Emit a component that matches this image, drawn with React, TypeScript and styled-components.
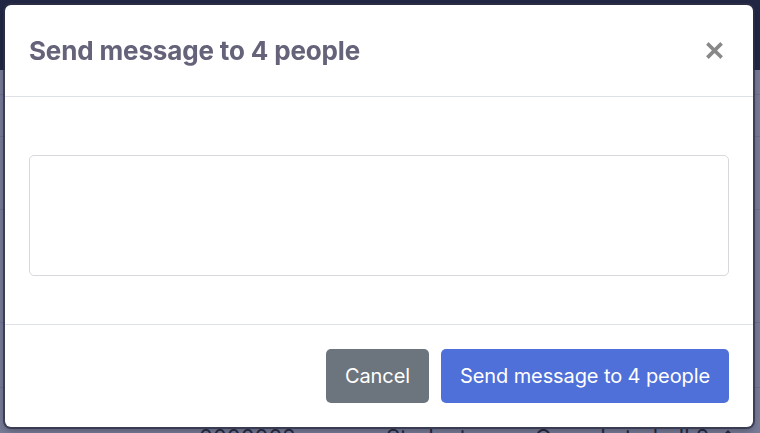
import React, { FC } from "react";
import styled, { createGlobalStyle } from "styled-components";

const GlobalStyle = createGlobalStyle`
  html, body {
    margin: 0;
    padding: 0;
    width: 760px;
    height: 433px;
    overflow: hidden;
    font-family: Inter, "Liberation Sans", sans-serif;
  }
`;

const Page = styled.div`
  width: 760px;
  height: 433px;
  background: #787c98;
  overflow: hidden;
`;

const TopBar = styled.div`
  height: 70px;
  background: #222844;
`;

const Row = styled.div<{ $h: number }>`
  height: ${(p) => p.$h}px;
  border-bottom: 1px solid #6c7090;
  display: flex;
  align-items: flex-start;
  box-sizing: border-box;
`;

const Cell = styled.span<{ $w: number }>`
  width: ${(p) => p.$w}px;
  padding-top: 36px;
  font-size: 22px;
  line-height: 26px;
  color: #262a44;
  white-space: nowrap;
  display: flex;
  align-items: center;
  gap: 8px;
`;

const Backdrop = styled.div`
  position: fixed;
  inset: 0;
  padding: 5px 7px 6px 5px;
  display: flex;
`;

const Modal = styled.div`
  flex: 1;
  display: flex;
  flex-direction: column;
  background: #fff;
  border-radius: 6px;
  box-shadow: 0 0 0 2px rgba(45, 48, 70, 0.75), 0 3px 8px rgba(0, 0, 0, 0.35);
  overflow: hidden;
`;

const Header = styled.div`
  height: 92px;
  flex-shrink: 0;
  display: flex;
  align-items: center;
  justify-content: space-between;
  padding: 0 30px 0 24px;
  border-bottom: 1px solid #dee2e6;
  box-sizing: border-box;
`;

const Title = styled.h2`
  margin: 0;
  font-size: 26px;
  font-weight: 700;
  letter-spacing: -0.15px;
  color: #64637a;
`;

const CloseButton = styled.button`
  border: 0;
  background: none;
  padding: 0;
  width: 17px;
  height: 17px;
  display: flex;
  cursor: pointer;
  color: #888;
`;

const Body = styled.div`
  flex: 1;
  padding: 58px 24px 0;
`;

const Message = styled.textarea`
  display: block;
  width: 100%;
  height: 121px;
  box-sizing: border-box;
  border: 1px solid #d6d8dd;
  border-radius: 5px;
  resize: none;
  font-family: inherit;
  font-size: 16px;
  padding: 8px 12px;
  outline: none;
`;

const Footer = styled.div`
  height: 103px;
  flex-shrink: 0;
  display: flex;
  justify-content: flex-end;
  align-items: flex-start;
  gap: 12px;
  padding: 24px 24px 0;
  border-top: 1px solid #dee2e6;
  box-sizing: border-box;
`;

const Button = styled.button<{ $variant: "secondary" | "primary" }>`
  height: 54px;
  padding: 0 19px;
  border: 0;
  border-radius: 5px;
  font-family: inherit;
  font-size: 20px;
  letter-spacing: -0.1px;
  color: #fff;
  background: ${(p) => (p.$variant === "primary" ? "#4f6fd9" : "#6c757d")};
  cursor: pointer;
`;

const CloseIcon: FC = () => (
  <svg viewBox="0 0 16 16" width="17" height="17">
    <path d="M2.5 2.5 L13.5 13.5 M13.5 2.5 L2.5 13.5" stroke="currentColor" strokeWidth="3.4" strokeLinecap="square" />
  </svg>
);

const EditIcon: FC = () => (
  <svg viewBox="0 0 16 16" width="16" height="16">
    <path d="M11 1 L15 5 L6 14 L1 15 L2 10 Z" fill="currentColor" />
  </svg>
);

const rows = [25, 42, 73, 113, 65];

const App: FC = () => {
  const count = 4;
  return (
    <>
      <GlobalStyle />
      <Page>
        <TopBar />
        {rows.map((h, i) => (
          <Row key={i} $h={h} />
        ))}
        <Row $h={70}>
          <Cell $w={199} />
          <Cell $w={187}>0000002</Cell>
          <Cell $w={149}>Student</Cell>
          <Cell $w={200}>
            Grup de treball 2
            <EditIcon />
          </Cell>
        </Row>
      </Page>
      <Backdrop>
        <Modal role="dialog">
          <Header>
            <Title>Send message to {count} people</Title>
            <CloseButton aria-label="Close">
              <CloseIcon />
            </CloseButton>
          </Header>
          <Body>
            <Message />
          </Body>
          <Footer>
            <Button $variant="secondary">Cancel</Button>
            <Button $variant="primary">Send message to {count} people</Button>
          </Footer>
        </Modal>
      </Backdrop>
    </>
  );
};

export default App;
